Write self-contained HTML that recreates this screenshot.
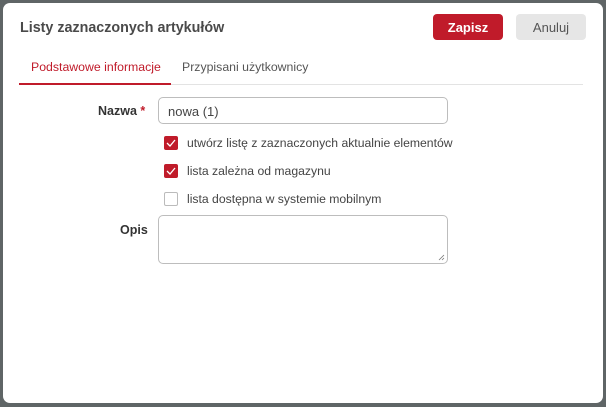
<!DOCTYPE html>
<html><head><style>
*{box-sizing:border-box;margin:0;padding:0}
body{width:606px;height:407px;background:#5f6566;font-family:"Liberation Sans",sans-serif;position:relative;overflow:hidden}
.dlg{position:absolute;left:3px;top:3px;width:600px;height:400px;background:#fff;border-radius:7px}
.a{position:absolute}
.title{left:17px;top:17px;font-size:14.3px;font-weight:bold;color:#4a4a4a}
.btn{top:11px;height:26px;border-radius:4px;font-size:13px;display:flex;align-items:center;justify-content:center}
.z{left:430px;width:70px;background:#c01b2a;color:#fff;font-weight:bold}
.n{left:513px;width:70px;background:#e6e6e6;color:#555}
.tab{top:57px;font-size:12.3px}
.ul{left:16px;top:80px;width:152px;height:2px;background:#c01b2a}
.dv{left:16px;top:81px;width:564px;height:1px;background:#e3e3e3}
.lbl{font-size:12.5px;color:#333;font-weight:bold}
.inp{left:155px;top:94px;width:290px;height:27px;border:1px solid #bdbdbd;border-radius:5px;font-size:13px;color:#444;padding:6px 9px}
.cb{left:161px;width:14px;height:14px;border-radius:2px;background:#c01b2a}
.cb svg{position:absolute;left:2px;top:3px}
.cbe{background:#fff;border:1px solid #bbb}
.ct{left:184px;font-size:12.2px;color:#444}
.ta{left:155px;top:212px;width:290px;height:49px;border:1px solid #bdbdbd;border-radius:5px}
</style></head><body>
<div class="dlg">
<div class="a title">Listy zaznaczonych artykułów</div>
<div class="a btn z">Zapisz</div>
<div class="a btn n">Anuluj</div>
<div class="a tab" style="left:28px;color:#c01b2a">Podstawowe informacje</div>
<div class="a tab" style="left:179px;color:#555">Przypisani użytkownicy</div>
<div class="a dv"></div>
<div class="a ul"></div>
<div class="a lbl" style="left:95px;top:101px">Nazwa <span style="color:#c01b2a">*</span></div>
<div class="a inp">nowa (1)</div>
<div class="a cb" style="top:133px"><svg width="10" height="8"><path d="M1 4l3 3 5-6" stroke="#fff" stroke-width="1.3" fill="none"/></svg></div>
<div class="a ct" style="top:133px">utwórz listę z zaznaczonych aktualnie elementów</div>
<div class="a cb" style="top:161px"><svg width="10" height="8"><path d="M1 4l3 3 5-6" stroke="#fff" stroke-width="1.3" fill="none"/></svg></div>
<div class="a ct" style="top:161px">lista zależna od magazynu</div>
<div class="a cb cbe" style="top:189px"></div>
<div class="a ct" style="top:189px">lista dostępna w systemie mobilnym</div>
<div class="a lbl" style="left:117px;top:220px">Opis</div>
<div class="a ta"><svg class="a" style="right:2px;bottom:2px" width="7" height="7"><path d="M6 1L1 6M6 4L4 6" stroke="#777" stroke-width="0.8"/></svg></div>
</div>
</body></html>
